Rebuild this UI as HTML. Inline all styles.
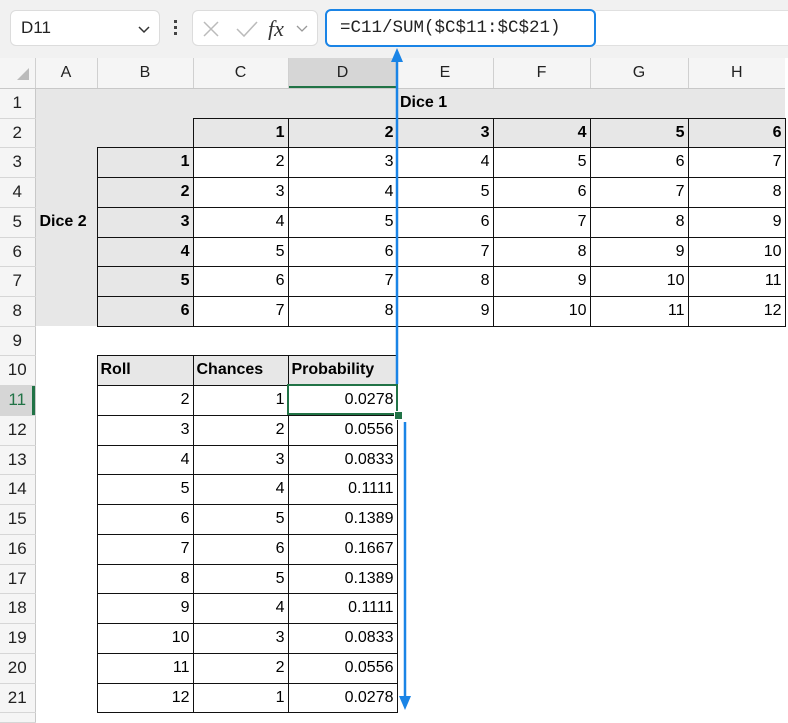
<!DOCTYPE html>
<html><head><meta charset="utf-8"><style>
body{margin:0;width:788px;height:719px;overflow:hidden;background:#fff;font-family:"Liberation Sans",Arial,sans-serif;position:relative}
.top{position:absolute;left:0;top:0;width:788px;height:58px;background:#f1f1f1}
.box{position:absolute;background:#fff;border:1px solid #dcdcdc;border-radius:6px;box-sizing:border-box}
table{position:absolute;left:0;top:58px;border-collapse:collapse;table-layout:fixed;font-size:16px}
td{padding:0 3px 0 3px;overflow:hidden;white-space:nowrap;color:#000;text-align:right}
tr.h td{background:#f5f5f5;text-align:center;font-size:16px;color:#222;border-left:1px solid #d0d0d0;border-bottom:1px solid #c8c8c8}
td.r{background:#f5f5f5;text-align:center;color:#222;border-bottom:1px solid #d6d6d6;border-right:1px solid #c8c8c8;padding:0;font-size:17px}
.g{background:#e7e7e7}
.b{border:1.5px solid #111}
.k{font-weight:bold}
.w{background:#fff}
.l{text-align:left}
</style></head><body>
<div class="top"></div>
<div class="box" style="left:10px;top:10px;width:150px;height:36px"><span style="position:absolute;left:10px;top:7px;font-size:17px;color:#222">D11</span>
<svg style="position:absolute;left:126px;top:14px" width="14" height="10"><path d="M2 2 L7 7 L12 2" fill="none" stroke="#333" stroke-width="1.5"/></svg></div>
<div style="position:absolute;left:174px;top:20px;width:3px;height:3px;background:#444;box-shadow:0 6px #444,0 12px #444"></div>
<div class="box" style="left:192px;top:10px;width:126px;height:36px">
<svg style="position:absolute;left:8px;top:7px" width="115" height="22"><path d="M3 4 L17 18 M17 4 L3 18" stroke="#bbb" stroke-width="1.5"/><path d="M36 11 L43 18 L56 4" fill="none" stroke="#bbb" stroke-width="1.5"/><text x="67" y="18" font-family="Liberation Serif" font-style="italic" font-size="22" fill="#333">fx</text><path d="M96 8 L101 13 L106 8" fill="none" stroke="#999" stroke-width="1.3"/></svg></div>
<div style="position:absolute;left:596px;top:10px;width:192px;height:36px;background:#fff;border-top:1px solid #e0e0e0;border-bottom:1px solid #e0e0e0;box-sizing:border-box"></div>
<div style="position:absolute;left:325px;top:9px;width:271px;height:38px;border:2px solid #1a84e6;border-radius:6px;background:#fff;box-sizing:border-box"><span style="position:absolute;left:13px;top:7px;font-family:'Liberation Mono',monospace;font-size:17.5px;color:#222">=C11/SUM($C$11:$C$21)</span></div>
<table>
<colgroup><col style="width:35px"><col style="width:62px"><col style="width:96px"><col style="width:95px"><col style="width:109px"><col style="width:96px"><col style="width:97px"><col style="width:98px"><col style="width:97px"></colgroup>
<tr class="h" style="height:30px"><td style="background:#f5f5f5;border-left:none"><svg width="20" height="20" style="position:relative;left:6px;top:4px"><path d="M16 4 L16 16 L4 16Z" fill="#bbb"/></svg></td><td>A</td><td>B</td><td>C</td><td style="background:#d6d6d6;box-shadow:inset 0 -2px #217346;color:#222">D</td><td>E</td><td>F</td><td>G</td><td>H</td></tr>
<tr style="height:30px"><td class="r">1</td><td class="g"></td><td class="g"></td><td class="g"></td><td class="g"></td><td class="g k l">Dice 1</td><td class="g"></td><td class="g"></td><td class="g"></td></tr>
<tr style="height:29px"><td class="r">2</td><td class="g"></td><td class="g"></td><td class="g b k">1</td><td class="g b k">2</td><td class="g b k">3</td><td class="g b k">4</td><td class="g b k">5</td><td class="g b k">6</td></tr>
<tr style="height:30px"><td class="r">3</td><td class="g"></td><td class="g b k">1</td><td class="b">2</td><td class="b">3</td><td class="b">4</td><td class="b">5</td><td class="b">6</td><td class="b">7</td></tr>
<tr style="height:30px"><td class="r">4</td><td class="g"></td><td class="g b k">2</td><td class="b">3</td><td class="b">4</td><td class="b">5</td><td class="b">6</td><td class="b">7</td><td class="b">8</td></tr>
<tr style="height:30px"><td class="r">5</td><td class="g k l" style="padding-left:4px">Dice 2</td><td class="g b k">3</td><td class="b">4</td><td class="b">5</td><td class="b">6</td><td class="b">7</td><td class="b">8</td><td class="b">9</td></tr>
<tr style="height:29px"><td class="r">6</td><td class="g"></td><td class="g b k">4</td><td class="b">5</td><td class="b">6</td><td class="b">7</td><td class="b">8</td><td class="b">9</td><td class="b">10</td></tr>
<tr style="height:30px"><td class="r">7</td><td class="g"></td><td class="g b k">5</td><td class="b">6</td><td class="b">7</td><td class="b">8</td><td class="b">9</td><td class="b">10</td><td class="b">11</td></tr>
<tr style="height:30px"><td class="r">8</td><td class="g"></td><td class="g b k">6</td><td class="b">7</td><td class="b">8</td><td class="b">9</td><td class="b">10</td><td class="b">11</td><td class="b">12</td></tr>
<tr style="height:29px"><td class="r">9</td><td colspan="8"></td></tr>
<tr style="height:30px"><td class="r">10</td><td></td><td class="g b k l">Roll</td><td class="g b k l">Chances</td><td class="g b k l">Probability</td><td colspan="4"></td></tr>
<tr style="height:30px"><td class="r" style="background:#d6d6d6;color:#217346;box-shadow:inset -3px 0 #217346">11</td><td></td><td class="b">2</td><td class="b">1</td><td class="b">0.0278</td><td colspan="4"></td></tr>
<tr style="height:30px"><td class="r">12</td><td></td><td class="b">3</td><td class="b">2</td><td class="b">0.0556</td><td colspan="4"></td></tr>
<tr style="height:29px"><td class="r">13</td><td></td><td class="b">4</td><td class="b">3</td><td class="b">0.0833</td><td colspan="4"></td></tr>
<tr style="height:30px"><td class="r">14</td><td></td><td class="b">5</td><td class="b">4</td><td class="b">0.1111</td><td colspan="4"></td></tr>
<tr style="height:30px"><td class="r">15</td><td></td><td class="b">6</td><td class="b">5</td><td class="b">0.1389</td><td colspan="4"></td></tr>
<tr style="height:30px"><td class="r">16</td><td></td><td class="b">7</td><td class="b">6</td><td class="b">0.1667</td><td colspan="4"></td></tr>
<tr style="height:29px"><td class="r">17</td><td></td><td class="b">8</td><td class="b">5</td><td class="b">0.1389</td><td colspan="4"></td></tr>
<tr style="height:30px"><td class="r">18</td><td></td><td class="b">9</td><td class="b">4</td><td class="b">0.1111</td><td colspan="4"></td></tr>
<tr style="height:30px"><td class="r">19</td><td></td><td class="b">10</td><td class="b">3</td><td class="b">0.0833</td><td colspan="4"></td></tr>
<tr style="height:30px"><td class="r">20</td><td></td><td class="b">11</td><td class="b">2</td><td class="b">0.0556</td><td colspan="4"></td></tr>
<tr style="height:29px"><td class="r">21</td><td></td><td class="b">12</td><td class="b">1</td><td class="b">0.0278</td><td colspan="4"></td></tr>
<tr style="height:10px"><td class="r"></td><td colspan="8"></td></tr>
</table>
<div style="position:absolute;left:287px;top:384px;width:111px;height:31px;border:2px solid #217346;box-sizing:border-box"></div>
<div style="position:absolute;left:394px;top:411px;width:7px;height:7px;background:#217346;border:1px solid #fff"></div>
<svg style="position:absolute;left:0;top:0" width="788" height="719">
<line x1="397" y1="58" x2="397" y2="384" stroke="#1a84e6" stroke-width="2.5"/>
<path d="M391 62 L397 48 L403 62Z" fill="#1a84e6"/>
<line x1="405" y1="422" x2="405" y2="700" stroke="#1a84e6" stroke-width="2.5"/>
<path d="M399 696 L405 710 L411 696Z" fill="#1a84e6"/>
</svg>
</body></html>
